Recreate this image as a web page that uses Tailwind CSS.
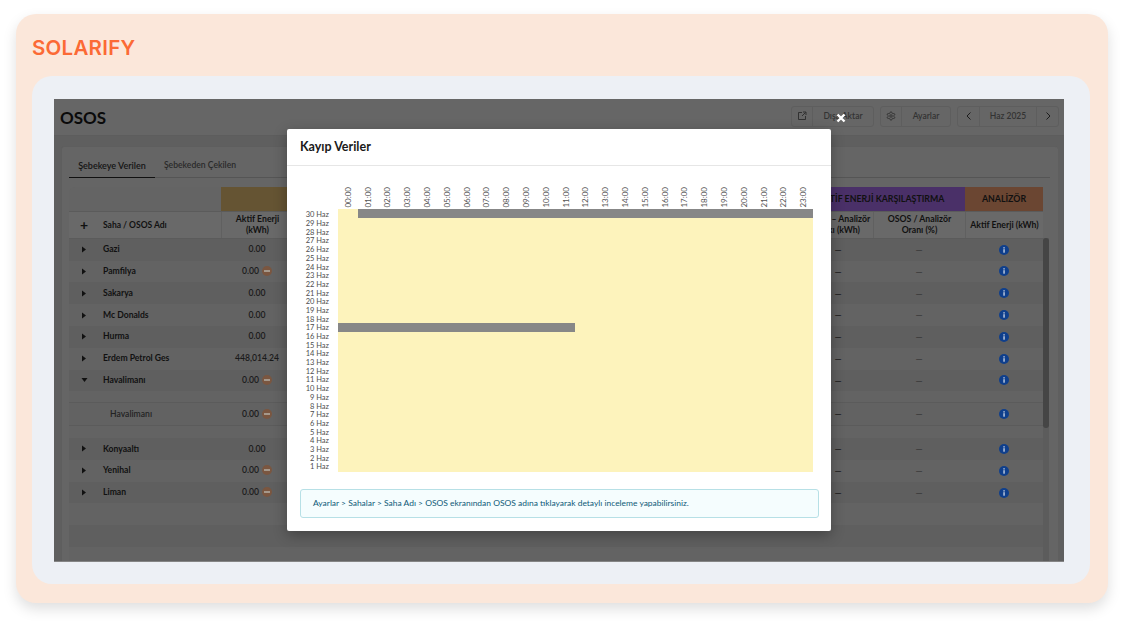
<!DOCTYPE html>
<html lang="en">
<head>
<meta charset="UTF-8" />
<title>Solarify OSOS</title>
<script src="https://cdn.jsdelivr.net/npm/@tailwindcss/browser@4"></script>
</head>
<body class="w-[1124px] h-[622px] overflow-hidden bg-white pl-[16px] pt-[14px] font-['Lato',sans-serif]">
	<!-- Outer card -->
	<div class="w-[1092px] h-[589px] rounded-[20px] bg-[#fbe7da] shadow-[0_6px_14px_rgba(0,0,0,0.13)] pl-[16px]">
		<div class="h-[62px] pt-[22px] text-[20.500px] leading-[24px] font-semibold tracking-[0.25px] text-[#fb6a35] font-['Inter',sans-serif]">SOLARIFY</div>

		<div class="w-[1058px] h-[508px] rounded-[20px] bg-[#edf0f5] pl-[22px] pt-[23px]">
			<!-- Dimmed app screen -->
			<div class="relative w-[1010px] h-[463px] overflow-hidden bg-[#5f5f5f] border-b border-[#858585]">
				<!-- Top bar -->
				<div class="h-[37px] bg-[#666666] border-b border-[#5d5d5d] flex items-center justify-between pl-[6px] pr-[5px]">
					<h1 class="text-[17px] font-bold text-[#0a0a0a] leading-none">OSOS</h1>
					<div class="flex gap-[6px] text-[8.500px] text-[#333333] font-semibold mt-[-2px]">
						<div class="flex w-[83px] h-[21px] rounded-[3px] border border-[#5e5e5e] items-center">
							<div class="w-[21px] h-full border-r border-[#5e5e5e] flex items-center justify-center">
								<svg width="10" height="10" viewBox="0 0 10 10" fill="none" stroke="#2b2b2b" stroke-width="0.9"><path d="M5 1.500H1.500v7h7V5M5 5l3.500-3.500M6 1h3v3"/></svg>
							</div>
							<span class="flex-1 text-center">Dışa Aktar</span>
						</div>
						<div class="flex w-[71px] h-[21px] rounded-[3px] border border-[#5e5e5e] items-center">
							<div class="w-[21px] h-full border-r border-[#5e5e5e] flex items-center justify-center">
								<svg width="10" height="10" viewBox="0 0 24 24" fill="none" stroke="#2b2b2b" stroke-width="2"><path d="M12.220 2h-.44a2 2 0 0 0-2 2v.18a2 2 0 0 1-1 1.730l-.43.25a2 2 0 0 1-2 0l-.15-.08a2 2 0 0 0-2.730.73l-.22.38a2 2 0 0 0 .73 2.730l.15.1a2 2 0 0 1 1 1.720v.51a2 2 0 0 1-1 1.740l-.15.09a2 2 0 0 0-.73 2.730l.22.38a2 2 0 0 0 2.730.73l.15-.08a2 2 0 0 1 2 0l.43.25a2 2 0 0 1 1 1.730V20a2 2 0 0 0 2 2h.44a2 2 0 0 0 2-2v-.18a2 2 0 0 1 1-1.730l.43-.25a2 2 0 0 1 2 0l.15.08a2 2 0 0 0 2.730-.73l.22-.39a2 2 0 0 0-.73-2.730l-.15-.08a2 2 0 0 1-1-1.740v-.5a2 2 0 0 1 1-1.740l.15-.09a2 2 0 0 0 .73-2.730l-.22-.38a2 2 0 0 0-2.730-.73l-.15.08a2 2 0 0 1-2 0l-.43-.25a2 2 0 0 1-1-1.730V4a2 2 0 0 0-2-2z"/><circle cx="12" cy="12" r="3"/></svg>
							</div>
							<span class="flex-1 text-center">Ayarlar</span>
						</div>
						<div class="flex w-[102px] h-[21px] rounded-[3px] border border-[#5e5e5e] items-center">
							<div class="w-[22px] h-full border-r border-[#5e5e5e] flex items-center justify-center">
								<svg width="8" height="10" viewBox="0 0 8 10" fill="none" stroke="#1c1c1c" stroke-width="1"><path d="M5.500 1.500L2 5l3.500 3.500"/></svg>
							</div>
							<span class="flex-1 text-center">Haz 2025</span>
							<div class="w-[22px] h-full border-l border-[#5e5e5e] flex items-center justify-center">
								<svg width="8" height="10" viewBox="0 0 8 10" fill="none" stroke="#1c1c1c" stroke-width="1"><path d="M2.500 1.500L6 5 2.500 8.500"/></svg>
							</div>
						</div>
					</div>
				</div>

				<!-- Page card -->
				<div class="ml-[7px] mt-[10px] w-[997px] h-[420px] bg-[#656565] border-l border-t border-[#5e5e5e] rounded-t-[3px] pl-[7px] pr-[8px]">
					<div class="flex h-[31px] w-[981px] border-b border-[#555555] text-[9px] font-semibold">
						<div class="w-[86px] h-[31px] border-b border-[#111111] flex items-center justify-center pt-[7px] text-[#141414]">Şebekeye Verilen</div>
						<div class="w-[90px] flex items-center justify-center pt-[7px] text-[8.600px] text-[#2a2a2a]">Şebekeden Çekilen</div>
					</div>

					<div class="mt-[9px] flex">
						<div class="w-[974px]">
							<!-- Band row -->
							<div class="flex h-[25px] bg-[#646464] rounded-tl-[6px] text-[8.800px] font-bold text-[#111111] border-b border-[#5b5b5b]">
								<div class="w-[152px]"></div>
								<div class="w-[200px] bg-[#655433]"></div>
								<div class="flex-1"></div>
								<div class="w-[168px] bg-[#4a3068] flex items-center justify-center">AKTİF ENERJİ KARŞILAŞTIRMA</div>
								<div class="w-[78px] bg-[#6b4632] flex items-center justify-center">ANALİZÖR</div>
							</div>
							<!-- Column headers -->
							<div class="grid grid-cols-[152px_72px_1fr_70px_92px_78px] h-[26.800px] bg-[#696969] text-[8.700px] leading-[10.500px] font-bold text-[#111111] text-center border-b border-[#5b5b5b]">
								<div class="flex items-center text-left pt-[1px]">
									<span class="w-[30px] text-center text-[14px] leading-none font-bold">+</span>
									<span class="ml-[4px] text-[8.500px]">Saha / OSOS Adı</span>
								</div>
								<div class="flex items-center justify-center border-l border-[#606060]">Aktif Enerji<br />(kWh)</div>
								<div></div>
								<div class="flex items-center justify-center whitespace-nowrap">OSOS – Analizör<br />Farkı (kWh)</div>
								<div class="flex items-center justify-center border-l border-[#606060]">OSOS / Analizör<br />Oranı (%)</div>
								<div class="flex items-center justify-center border-l border-[#606060]">Aktif Enerji (kWh)</div>
							</div>
							<!-- Rows -->
							<div id="rows"></div>
						</div>
						<!-- Scrollbar -->
						<div class="w-[6px] mt-[51px] h-[400px] bg-[#5c5c5c]">
							<div class="w-[6px] h-[190px] rounded-[3px] bg-[#454545]"></div>
						</div>
					</div>
				</div>

				<!-- Modal close -->
				<svg class="absolute left-[782px] top-[14px]" width="10" height="10" viewBox="0 0 10 10" stroke="#ffffff" stroke-width="2.400"><path d="M1.500 1.500l7 7M8.500 1.500l-7 7"/></svg>

				<!-- Modal -->
				<div class="absolute left-[233px] top-[30px] w-[544px] h-[402px] bg-white rounded-[2px] shadow-[0_4px_14px_rgba(0,0,0,0.3)]">
					<div class="h-[37px] border-b border-[#e6e6e6] pl-[13px] flex items-center text-[12.500px] font-bold text-[#1a1a1a]">Kayıp Veriler</div>
					<div class="pl-[51px] pt-[21px]">
						<div id="hours" class="grid grid-cols-[repeat(24,19.800px)] h-[22px] w-[475px]"></div>
						<div class="flex ml-[-51px]">
							<div id="days" class="w-[42px] pt-[2.400px] text-right text-[7.500px] text-[#4d4d4d]"></div>
							<div id="plot" class="ml-[9px] w-[475px] bg-[#fdf3bc]"></div>
						</div>
					</div>
					<div class="ml-[13px] mr-[12px] mt-[17px] h-[29px] rounded-[3px] border border-[#b7e0e6] bg-[#f5fdfe] pl-[12px] flex items-center text-[8.450px] text-[#0e5a78]">
						Ayarlar &gt; Sahalar &gt; Saha Adı &gt; OSOS ekranından OSOS adına tıklayarak detaylı inceleme yapabilirsiniz.
					</div>
				</div>
			</div>
		</div>
	</div>

	<script>
		const minus = '<svg class="ml-[3px] mt-[-1px] shrink-0" width="10" height="10" viewBox="0 0 10 10"><circle cx="5" cy="5" r="5" fill="#7a5640"/><rect x="2" y="4.200" width="6" height="1.600" fill="#b0a89f"/></svg>';
		const info = '<svg width="10" height="10" viewBox="0 0 10 10"><circle cx="5" cy="5" r="5" fill="#0f3f8c"/><rect x="4.300" y="4.200" width="1.500" height="3.500" fill="#b9c6dc"/><rect x="4.300" y="2.200" width="1.500" height="1.300" fill="#b9c6dc"/></svg>';
		const right = '<svg width="6" height="7" viewBox="0 0 6 7"><path d="M1 0.500L5 3.500 1 6.500z" fill="#111111"/></svg>';
		const down = '<svg width="7" height="6" viewBox="0 0 7 6"><path d="M0.500 1L6.500 1 3.500 5z" fill="#111111"/></svg>';

		const grid = "grid grid-cols-[152px_72px_1fr_70px_92px_78px] items-center text-[8.600px]";
		const dashes = `<div class="text-center text-[9px] text-[#111111]">—</div>
				<div class="text-center text-[9px] text-[#333333]">—</div>
				<div class="flex justify-center">${info}</div>`;

		function siteRow(name, value, warn, open, stripe) {
			return `<div class="${grid} h-[21.800px] ${stripe ? "bg-[#636363]" : "bg-[#5f5f5f]"}">
				<div class="flex items-center font-bold text-[#111111]"><span class="w-[30px] mr-[4px] flex justify-center">${open ? down : right}</span>${name}</div>
				<div class="flex items-center justify-center font-semibold text-[#1a1a1a]">${value}${warn ? minus : ""}</div>
				<div></div>
				${dashes}
			</div>`;
		}

		const rows = document.getElementById("rows");
		let html = "";
		html += siteRow("Gazi", "0.00", false, false, false);
		html += siteRow("Pamfilya", "0.00", true, false, true);
		html += siteRow("Sakarya", "0.00", false, false, false);
		html += siteRow("Mc Donalds", "0.00", false, false, true);
		html += siteRow("Hurma", "0.00", false, false, false);
		html += siteRow("Erdem Petrol Ges", "448,014.24", false, false, true);
		html += siteRow("Havalimanı", "0.00", true, true, false);
		// Expanded child row
		html += `<div class="h-[10.700px] bg-[#636363]"></div>
			<div class="${grid} h-[24px] bg-[#626262] border-y border-[#5b5b5b]">
				<div class="pl-[41px] font-semibold text-[#222222]">Havalimanı</div>
				<div class="flex items-center justify-center font-semibold text-[#1a1a1a]">0.00${minus}</div>
				<div></div>
				${dashes}
			</div>
			<div class="h-[12px] bg-[#636363]"></div>`;
		html += siteRow("Konyaaltı", "0.00", false, false, false);
		html += siteRow("Yenihal", "0.00", true, false, true);
		html += siteRow("Liman", "0.00", true, false, false);
		html += '<div class="h-[22px] bg-[#636363]"></div><div class="h-[22px] bg-[#5f5f5f]"></div><div class="h-[22px] bg-[#636363]"></div>';
		rows.innerHTML = html;

		// Hour labels
		let hours = "";
		for (let h = 0; h < 24; h++) {
			const label = String(h).padStart(2, "0") + ":00";
			hours += `<div class="flex justify-center items-start"><span class="[writing-mode:vertical-rl] rotate-180 text-[8px] leading-[10px] text-[#555555]">${label}</span></div>`;
		}
		document.getElementById("hours").innerHTML = hours;

		// Day labels and plot rows, newest on top
		let days = "";
		let plot = "";
		for (let d = 30; d >= 1; d--) {
			days += `<div class="h-[8.690px] leading-[8.690px]">${d} Haz</div>`;
			if (d === 30) {
				plot += '<div class="h-[8.770px] ml-[20px] bg-[#878787]"></div>';
			} else if (d === 17) {
				plot += '<div class="h-[8.770px] w-[237px] bg-[#878787]"></div>';
			} else {
				plot += '<div class="h-[8.770px]"></div>';
			}
		}
		document.getElementById("days").innerHTML = days;
		document.getElementById("plot").innerHTML = plot;
	</script>
</body>
</html>
